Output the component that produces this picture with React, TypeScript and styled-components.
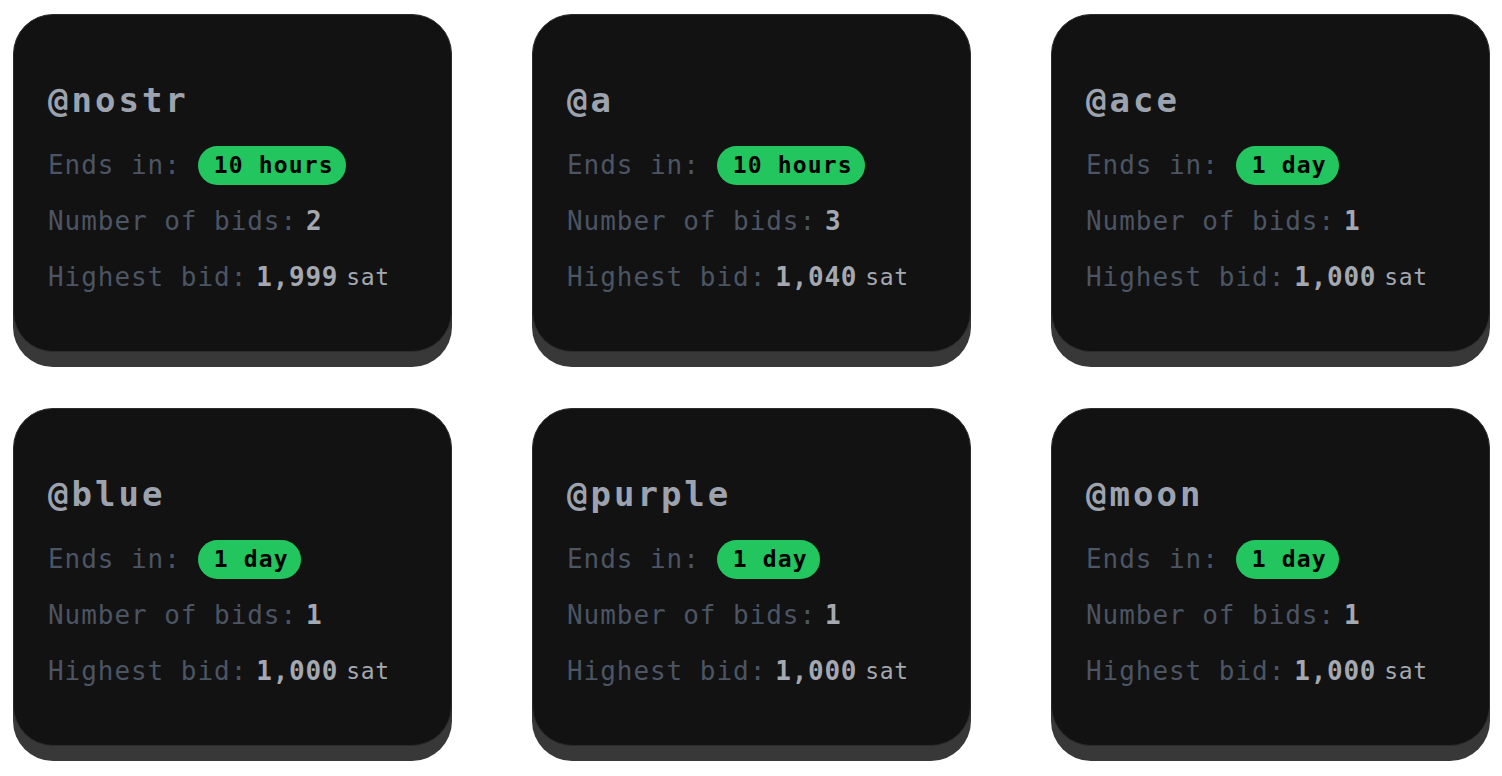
import styled, { createGlobalStyle } from "styled-components";

const GlobalStyle = createGlobalStyle`
    html, body {
        margin: 0;
        padding: 0;
        background: #ffffff;
    }
    body {
        font-family: "DejaVu Sans Mono", "Liberation Mono", monospace;
    }
`;

const Grid = styled.div`
    display: grid;
    grid-template-columns: repeat(3, 439px);
    column-gap: 80px;
    row-gap: 56px;
    padding: 14px 12px 30px 13px;
`;

const Card = styled.div`
    box-sizing: border-box;
    height: 338px;
    padding: 55px 34px 0;
    background: #121212;
    border: 1px solid #2c2c2c;
    border-radius: 40px;
    box-shadow: 0 15px 0 0 #383838;
`;

const Title = styled.h2`
    margin: 0 0 7px;
    font-size: 34px;
    line-height: 60px;
    font-weight: 700;
    letter-spacing: 3px;
    color: #9ca3af;
`;

const Row = styled.div`
    display: flex;
    align-items: center;
    height: 56px;
    font-size: 26px;
    letter-spacing: 0.95px;
    white-space: nowrap;
`;

const Label = styled.span`
    color: #4b5563;
`;

const Value = styled.span`
    margin-left: 9px;
    font-weight: 700;
    color: #a4a8b0;
    letter-spacing: 0.75px;
`;

const Unit = styled.span`
    margin-left: 8px;
    font-size: 23px;
    letter-spacing: 0.6px;
    color: #a4a8b0;
`;

const Badge = styled.span`
    display: inline-flex;
    align-items: center;
    height: 39px;
    margin-left: 17px;
    padding: 0 12px 0 16px;
    border-radius: 999px;
    background: #22c55e;
    color: #000000;
    font-size: 23px;
    font-weight: 700;
    letter-spacing: 1.15px;
`;

type Auction = {
    name: string;
    ends: string;
    bids: number;
    highest: string;
};

const auctions: Auction[] = [
    { name: "@nostr", ends: "10 hours", bids: 2, highest: "1,999" },
    { name: "@a", ends: "10 hours", bids: 3, highest: "1,040" },
    { name: "@ace", ends: "1 day", bids: 1, highest: "1,000" },
    { name: "@blue", ends: "1 day", bids: 1, highest: "1,000" },
    { name: "@purple", ends: "1 day", bids: 1, highest: "1,000" },
    { name: "@moon", ends: "1 day", bids: 1, highest: "1,000" },
];

function AuctionCard({ auction }: { auction: Auction }) {
    return (
        <Card>
            <Title>{auction.name}</Title>
            <Row>
                <Label>Ends in:</Label>
                <Badge>{auction.ends}</Badge>
            </Row>
            <Row>
                <Label>Number of bids:</Label>
                <Value>{auction.bids}</Value>
            </Row>
            <Row>
                <Label>Highest bid:</Label>
                <Value>{auction.highest}</Value>
                <Unit>sat</Unit>
            </Row>
        </Card>
    );
}

export default function App() {
    return (
        <>
            <GlobalStyle />
            <Grid>
                {auctions.map((a) => (
                    <AuctionCard key={a.name} auction={a} />
                ))}
            </Grid>
        </>
    );
}
